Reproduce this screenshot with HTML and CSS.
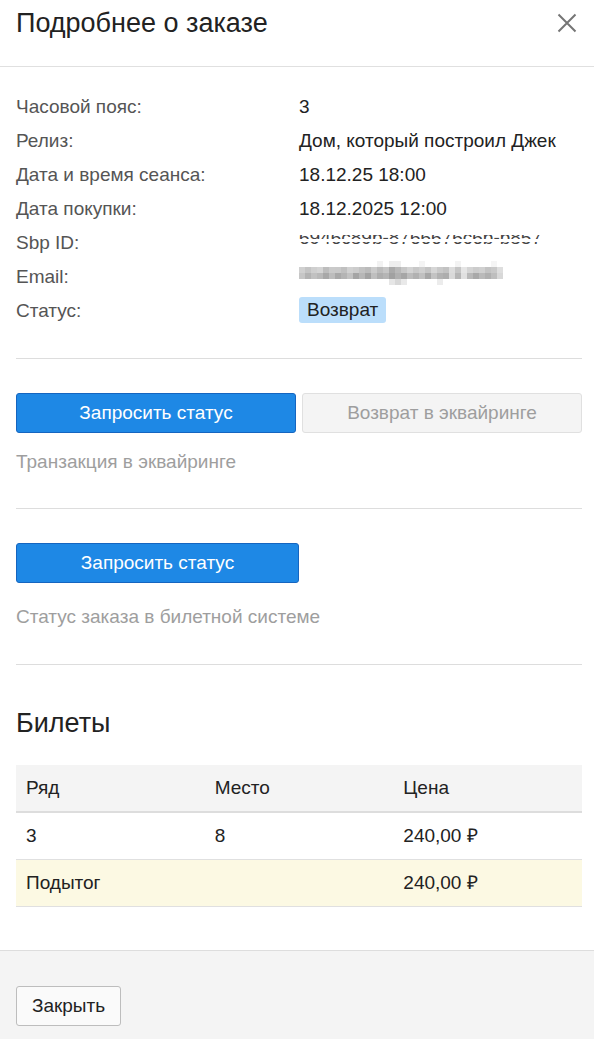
FILE: index.html
```html
<!DOCTYPE html>
<html lang="ru">
<head>
<meta charset="utf-8">
<link rel="stylesheet" href="styles.css">
</head>
<body>
<div class="modal">
  <header class="modal-header">
    <h1 class="modal-title">Подробнее о заказе</h1>
    <button class="close-btn" aria-label="Закрыть">
      <svg width="20" height="20" viewBox="0 0 20 20"><path d="M1.5 1.5 L18.5 18.5 M18.5 1.5 L1.5 18.5" stroke="#757575" stroke-width="2" fill="none"/></svg>
    </button>
  </header>
  <div class="modal-body">
    <section class="section info">
      <div class="info-row"><span class="label">Часовой пояс:</span><span class="value">3</span></div>
      <div class="info-row"><span class="label">Релиз:</span><span class="value">Дом, который построил Джек</span></div>
      <div class="info-row"><span class="label">Дата и время сеанса:</span><span class="value">18.12.25 18:00</span></div>
      <div class="info-row"><span class="label">Дата покупки:</span><span class="value">18.12.2025 12:00</span></div>
      <div class="info-row"><span class="label">Sbp ID:</span><span class="value"><span class="sbp-clip"><span class="sbp-text">6946c89b-8766676c6b-b857</span></span></span></div>
      <div class="info-row"><span class="label">Email:</span><span class="value">
        <svg class="pixelated" width="204" height="30" viewBox="0 0 34 5" shape-rendering="crispEdges">
          <rect x="13" y="0" width="1" height="1" fill="#f2f2f2"/><rect x="15" y="0" width="2" height="1" fill="#eeeeee"/><rect x="20" y="0" width="1" height="1" fill="#f4f4f4"/><rect x="26" y="0" width="1" height="1" fill="#f3f3f3"/><rect x="32" y="0" width="1" height="1" fill="#f5f5f5"/>
          <rect x="0" y="1" width="1" height="1" fill="#d0d0d0"/><rect x="1" y="1" width="1" height="1" fill="#c4c4c4"/><rect x="2" y="1" width="1" height="1" fill="#cfcfcf"/><rect x="3" y="1" width="1" height="1" fill="#d4d4d4"/><rect x="4" y="1" width="1" height="1" fill="#bdbdbd"/><rect x="5" y="1" width="1" height="1" fill="#cacaca"/><rect x="6" y="1" width="1" height="1" fill="#c9c9c9"/><rect x="7" y="1" width="1" height="1" fill="#c0c0c0"/><rect x="8" y="1" width="1" height="1" fill="#d1d1d1"/><rect x="9" y="1" width="1" height="1" fill="#cccccc"/><rect x="10" y="1" width="1" height="1" fill="#c2c2c2"/><rect x="11" y="1" width="1" height="1" fill="#bbbbbb"/><rect x="12" y="1" width="1" height="1" fill="#cbcbcb"/><rect x="13" y="1" width="1" height="1" fill="#bcbcbc"/><rect x="14" y="1" width="1" height="1" fill="#c6c6c6"/><rect x="15" y="1" width="1" height="1" fill="#aaaaaa"/><rect x="16" y="1" width="1" height="1" fill="#b8b8b8"/><rect x="17" y="1" width="1" height="1" fill="#c7c7c7"/><rect x="18" y="1" width="1" height="1" fill="#d3d3d3"/><rect x="19" y="1" width="1" height="1" fill="#c8c8c8"/><rect x="20" y="1" width="1" height="1" fill="#cfcfcf"/><rect x="21" y="1" width="1" height="1" fill="#c4c4c4"/><rect x="22" y="1" width="1" height="1" fill="#d6d6d6"/><rect x="23" y="1" width="1" height="1" fill="#c9c9c9"/><rect x="24" y="1" width="1" height="1" fill="#c2c2c2"/><rect x="25" y="1" width="1" height="1" fill="#dcdcdc"/><rect x="26" y="1" width="1" height="1" fill="#c5c5c5"/><rect x="27" y="1" width="1" height="1" fill="#e5e5e5"/><rect x="28" y="1" width="1" height="1" fill="#d4d4d4"/><rect x="29" y="1" width="1" height="1" fill="#cccccc"/><rect x="30" y="1" width="1" height="1" fill="#d0d0d0"/><rect x="31" y="1" width="1" height="1" fill="#c3c3c3"/><rect x="32" y="1" width="1" height="1" fill="#c9c9c9"/><rect x="33" y="1" width="1" height="1" fill="#dedede"/>
          <rect x="0" y="2" width="1" height="1" fill="#c6c6c6"/><rect x="1" y="2" width="1" height="1" fill="#b3b3b3"/><rect x="2" y="2" width="1" height="1" fill="#c1c1c1"/><rect x="3" y="2" width="1" height="1" fill="#b9b9b9"/><rect x="4" y="2" width="1" height="1" fill="#a8a8a8"/><rect x="5" y="2" width="1" height="1" fill="#bdbdbd"/><rect x="6" y="2" width="1" height="1" fill="#a9a9a9"/><rect x="7" y="2" width="1" height="1" fill="#b4b4b4"/><rect x="8" y="2" width="1" height="1" fill="#c2c2c2"/><rect x="9" y="2" width="1" height="1" fill="#a5a5a5"/><rect x="10" y="2" width="1" height="1" fill="#b7b7b7"/><rect x="11" y="2" width="1" height="1" fill="#a3a3a3"/><rect x="12" y="2" width="1" height="1" fill="#bfbfbf"/><rect x="13" y="2" width="1" height="1" fill="#aeaeae"/><rect x="14" y="2" width="1" height="1" fill="#b5b5b5"/><rect x="15" y="2" width="1" height="1" fill="#a1a1a1"/><rect x="16" y="2" width="1" height="1" fill="#b0b0b0"/><rect x="17" y="2" width="1" height="1" fill="#a6a6a6"/><rect x="18" y="2" width="1" height="1" fill="#bcbcbc"/><rect x="19" y="2" width="1" height="1" fill="#b1b1b1"/><rect x="20" y="2" width="1" height="1" fill="#c0c0c0"/><rect x="21" y="2" width="1" height="1" fill="#a7a7a7"/><rect x="22" y="2" width="1" height="1" fill="#c3c3c3"/><rect x="23" y="2" width="1" height="1" fill="#b2b2b2"/><rect x="24" y="2" width="1" height="1" fill="#adadad"/><rect x="25" y="2" width="1" height="1" fill="#d9d9d9"/><rect x="26" y="2" width="1" height="1" fill="#b6b6b6"/><rect x="27" y="2" width="1" height="1" fill="#e0e0e0"/><rect x="28" y="2" width="1" height="1" fill="#b9b9b9"/><rect x="29" y="2" width="1" height="1" fill="#a9a9a9"/><rect x="30" y="2" width="1" height="1" fill="#bababa"/><rect x="31" y="2" width="1" height="1" fill="#b0b0b0"/><rect x="32" y="2" width="1" height="1" fill="#bebebe"/><rect x="33" y="2" width="1" height="1" fill="#d8d8d8"/>
          <rect x="15" y="3" width="1" height="1" fill="#e6e6e6"/><rect x="16" y="3" width="1" height="1" fill="#d8d8d8"/><rect x="17" y="3" width="1" height="1" fill="#e9e9e9"/><rect x="23" y="3" width="1" height="1" fill="#ececec"/>
        </svg></span></div>
      <div class="info-row"><span class="label">Статус:</span><span class="value"><span class="badge">Возврат</span></span></div>
    </section>

    <section class="section acquiring">
      <div class="btn-pair">
        <button class="btn btn-primary">Запросить статус</button>
        <button class="btn btn-disabled">Возврат в эквайринге</button>
      </div>
      <p class="caption caption-first">Транзакция в эквайринге</p>
    </section>

    <section class="section ticketing">
      <div class="btn-pair">
        <button class="btn btn-primary">Запросить статус</button>
      </div>
      <p class="caption caption-second">Статус заказа в билетной системе</p>
    </section>

    <section class="tickets">
      <h2 class="tickets-title">Билеты</h2>
      <table class="tickets-table">
        <thead>
          <tr><th>Ряд</th><th>Место</th><th>Цена</th></tr>
        </thead>
        <tbody>
          <tr><td>3</td><td>8</td><td>240,00 ₽</td></tr>
          <tr class="subtotal"><td>Подытог</td><td></td><td>240,00 ₽</td></tr>
        </tbody>
      </table>
    </section>
  </div>
  <footer class="modal-footer">
    <button class="btn btn-default">Закрыть</button>
  </footer>
</div>
</body>
</html>
```

FILE: styles.css
```css
* { box-sizing: border-box; }
html, body {
  margin: 0;
  padding: 0;
  background: #ffffff;
  font-family: "Liberation Sans", Arial, sans-serif;
  color: #222222;
}
.modal {
  width: 594px;
  min-height: 1039px;
  display: flex;
  flex-direction: column;
  background: #fff;
}
.modal-header {
  height: 67px;
  border-bottom: 1px solid #e0e0e0;
  display: flex;
  align-items: flex-start;
  justify-content: space-between;
  padding: 0 17px 0 16px;
}
.modal-title {
  margin: 0;
  font-size: 27px;
  font-weight: normal;
  line-height: 30px;
  padding-top: 8px;
  color: #222;
}
.close-btn {
  border: none;
  background: none;
  padding: 0;
  margin-top: 13px;
  width: 20px;
  height: 20px;
  display: block;
}
.close-btn svg { display: block; }

.modal-body {
  padding: 0 12px 43px 16px;
}
.section {
  border-bottom: 1px solid #dddddd;
}
.info {
  padding: 23px 0 30px;
}
.info-row {
  display: flex;
  height: 34px;
  align-items: center;
  font-size: 19px;
}
.label {
  width: 283px;
  color: #555555;
}
.value {
  color: #222222;
  display: flex;
  align-items: center;
}
.sbp-clip {
  display: block;
  height: 16px;
  width: 242px;
  overflow: hidden;
  position: relative;
}
.sbp-clip::after {
  content: "";
  position: absolute;
  left: 0;
  right: 0;
  top: 4px;
  height: 3px;
  background: #ffffff;
}
.sbp-text {
  display: block;
  font-size: 19px;
  line-height: 19px;
  margin-top: -7px;
  color: #444;
  white-space: nowrap;
}
.pixelated { display: block; margin-top: -2px; }
.badge {
  background: #bbdefb;
  border-radius: 3px;
  padding: 0 8px;
  height: 26px;
  line-height: 26px;
  display: inline-block;
  margin-top: -2px;
}

.acquiring { padding: 34px 0 36px; }
.ticketing { padding: 34px 0 37px; }
.btn-pair {
  display: grid;
  grid-template-columns: 280px 280px;
  column-gap: 6px;
}
.ticketing .btn-pair { grid-template-columns: 283px; }
.btn {
  font-family: "Liberation Sans", Arial, sans-serif;
  font-size: 19px;
  height: 40px;
  border-radius: 3px;
  padding: 0 12px;
}
.btn-primary {
  background: #1e88e5;
  border: 1px solid #1565c0;
  color: #ffffff;
}
.btn-disabled {
  background: #f4f4f4;
  border: 1px solid #e0e0e0;
  color: #9e9e9e;
}
.btn-default {
  background: #fafafa;
  border: 1px solid #bdbdbd;
  color: #222222;
  width: 105px;
}
.caption {
  margin: 0;
  font-size: 19px;
  line-height: 20px;
  color: #9e9e9e;
}
.caption-first { margin-top: 19px; }
.caption-second { margin-top: 24px; }

.tickets { padding-top: 44px; }
.tickets-title {
  margin: 0;
  font-size: 27px;
  font-weight: normal;
  line-height: 28px;
  color: #222;
}
.tickets-table {
  margin-top: 28px;
  width: 566px;
  border-collapse: collapse;
  table-layout: fixed;
  font-size: 19px;
}
.tickets-table th {
  background: #f4f4f4;
  font-weight: normal;
  text-align: left;
  padding: 13px 10px;
  line-height: 20px;
  border-bottom: 2px solid #dddddd;
}
.tickets-table td {
  padding: 13px 10px;
  line-height: 20px;
  border-bottom: 1px solid #e0e0e0;
}
.tickets-table .subtotal td { background: #fcf9e3; }

.modal-footer {
  flex: 1;
  background: #f4f4f4;
  border-top: 1px solid #dddddd;
  padding: 35px 16px 14px;
}
```
